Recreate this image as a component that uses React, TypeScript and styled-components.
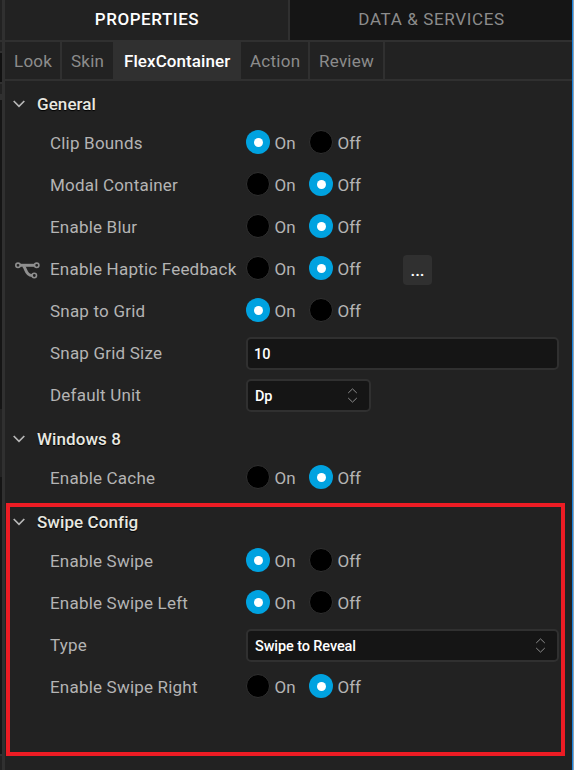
import React from "react";
import styled, { createGlobalStyle, css } from "styled-components";

const Global = createGlobalStyle`
  * { box-sizing: border-box; }
  body { margin: 0; background: #222; font-family: Roboto, "Liberation Sans", sans-serif; overflow: hidden; }
`;

const Window = styled.div`
  position: relative;
  display: flex;
  width: 574px;
  height: 770px;
  overflow: hidden;
  background: #222;
`;

const Gutter = styled.div`
  display: flex;
  flex-direction: column;
  width: 2px;
  background: #1f1f1f;
`;

const GutterPart = styled.div<{ $height: number; $color: string }>`
  height: ${(p) => p.$height}px;
  flex: none;
  background: ${(p) => p.$color};
`;

const Panel = styled.main`
  width: 570px;
  border-left: 3px solid #303030;
`;

const Edge = styled.div`
  width: 2px;
  background: #8fa3b5;
  border-left: 1px solid #1c86e0;
`;

const MainTabs = styled.nav`
  display: grid;
  grid-template-columns: 283px 1fr;
  gap: 2px;
  height: 42px;
  background: #303030;
  border-bottom: 2px solid #303030;
`;

const MainTab = styled.div<{ $active?: boolean }>`
  display: flex;
  align-items: center;
  justify-content: center;
  padding: 0 0 2px 1px;
  font-size: 17px;
  letter-spacing: ${(p) => (p.$active ? 0.55 : 0.63)}px;
  white-space: nowrap;
  font-weight: ${(p) => (p.$active ? 500 : 400)};
  color: ${(p) => (p.$active ? "#fff" : "#8c8c8c")};
  background: ${(p) => (p.$active ? "#222" : "#151515")};
`;

const SubTabs = styled.nav`
  display: flex;
  height: 39px;
  border-bottom: 2px solid #303030;
`;

const SubTab = styled.div<{ $width: number; $active?: boolean; $divided?: boolean }>`
  display: flex;
  align-items: center;
  padding: 0 0 0 9px;
  width: ${(p) => p.$width}px;
  font-size: 17px;
  letter-spacing: 0.25px;
  white-space: nowrap;
  color: #8c8c8c;
  ${(p) => p.$divided && css`border-right: 2px solid #303030;`}
  ${(p) =>
    p.$active &&
    css`
      padding-left: 11px;
      color: #fff;
      font-weight: 500;
      letter-spacing: 0.08px;
      background: #303030;
    `}
`;

const SectionHeader = styled.h2`
  display: flex;
  align-items: center;
  gap: 12px;
  height: 41px;
  margin: 0;
  padding: 5px 0 0 8px;
  font-size: 17px;
  font-weight: 500;
  letter-spacing: 0.08px;
  color: #e8e8e0;
  text-shadow: 0 1px 1px #000;
`;

const Row = styled.div`
  display: flex;
  align-items: center;
  height: 42px;
`;

const IconSlot = styled.div`
  display: flex;
  justify-content: flex-end;
  width: 35px;
  padding: 3px 0 0;
  margin-right: 10px;
`;

const Label = styled.span`
  width: 196px;
  font-size: 17px;
  letter-spacing: 0.2px;
  white-space: nowrap;
  color: #b4b4b4;
`;

const Radio = styled.label`
  display: flex;
  align-items: center;
  gap: 4.5px;
  width: 63px;
  font-size: 17px;
  color: #b4b4b4;
`;

const Dot = styled.span<{ $on: boolean }>`
  display: grid;
  place-items: center;
  width: 24px;
  height: 24px;
  margin-top: -2px;
  flex: none;
  border-radius: 50%;
  ${(p) =>
    p.$on
      ? css`
          background: #00a2e0;
          &::after {
            content: "";
            width: 9px;
            height: 9px;
            border-radius: 50%;
            background: #fff;
          }
        `
      : css`
          background: #000;
          border: 1px solid #303030;
        `}
`;

const MoreButton = styled.button`
  width: 29px;
  height: 30px;
  margin: 2px 0 0 31px;
  padding: 0;
  border: 0;
  border-radius: 4px;
  background: #303030;
  color: #fff;
  font: 500 17px Roboto, sans-serif;
`;

const Field = styled.div<{ $width: number; $select?: boolean }>`
  display: flex;
  align-items: center;
  justify-content: space-between;
  width: ${(p) => p.$width}px;
  height: 33px;
  margin-top: 1px;
  padding: 3px 11px 0 ${(p) => (p.$select ? 7 : 6)}px;
  border: 2px solid #303030;
  border-radius: 5px;
  background: #151515;
  color: #fff;
  font-size: 14.5px;
  line-height: 18px;
  font-weight: 500;
  letter-spacing: -0.1px;

  svg {
    margin-top: -3px;
  }
`;

const Highlight = styled.div`
  position: absolute;
  left: 6px;
  top: 503px;
  width: 559px;
  height: 253px;
  border: 4px solid #ed1c24;
`;

const Chevron = () => (
  <svg width="12" height="8" viewBox="0 0 12 8" fill="none" stroke="#b8b8b8" strokeWidth="1.7">
    <path d="M.7 1 6 6.3 11.3 1" />
  </svg>
);

const Stepper = () => (
  <svg width="10" height="15" viewBox="0 0 10 15" fill="none" stroke="#8c8c8c" strokeWidth="1">
    <path d="M.2 5 4.500 .9 8.800 5M.2 10 4.500 14.1 8.800 10" />
  </svg>
);

const ForkIcon = () => (
  <svg width="25" height="17" viewBox="0 0 25 17" fill="none" stroke="#8f8f8f">
    <path d="M5 3.3h14.500" strokeWidth="3" />
    <path d="M8.500 4C11.500 7 10.500 13.200 17 13.500" strokeWidth="3" />
    <g strokeWidth="1.600">
      <circle cx="3" cy="3.300" r="2.200" />
      <circle cx="21.700" cy="3.300" r="2.200" />
      <circle cx="19.300" cy="13.500" r="2.200" />
    </g>
  </svg>
);

const Toggle = ({ label, on, fork }: { label: string; on?: boolean; fork?: boolean }) => (
  <Row>
    <IconSlot>{fork && <ForkIcon />}</IconSlot>
    <Label>{label}</Label>
    <Radio><Dot $on={!!on} />On</Radio>
    <Radio><Dot $on={!on} />Off</Radio>
    {fork && <MoreButton>...</MoreButton>}
  </Row>
);

const Input = ({ label, value, width, select }: { label: string; value: string; width: number; select?: boolean }) => (
  <Row>
    <IconSlot />
    <Label>{label}</Label>
    <Field $width={width} $select={select}>
      {value}
      {select && <Stepper />}
    </Field>
  </Row>
);

const Section = ({ title, children }: { title: string; children: React.ReactNode }) => (
  <section>
    <SectionHeader><Chevron />{title}</SectionHeader>
    {children}
  </section>
);

export default function App() {
  return (
    <>
      <Global />
      <Window>
        <Gutter>
          <GutterPart $height={40} $color="#222" />
          <GutterPart $height={2} $color="#303030" />
          <GutterPart $height={9} $color="#222" />
          <GutterPart $height={2} $color="#303030" />
          <GutterPart $height={29} $color="#111" />
          <GutterPart $height={2} $color="#303030" />
          <GutterPart $height={10} $color="#222" />
          <GutterPart $height={6} $color="#303030" />
          <GutterPart $height={309} $color="#151515" />
          <GutterPart $height={68} $color="#222" />
          <GutterPart $height={277} $color="#151515" />
          <GutterPart $height={2} $color="#303030" />
          <GutterPart $height={14} $color="#222" />
        </Gutter>
        <Panel>
          <MainTabs>
            <MainTab $active>PROPERTIES</MainTab>
            <MainTab>DATA &amp; SERVICES</MainTab>
          </MainTabs>
          <SubTabs>
            <SubTab $width={57} $divided>Look</SubTab>
            <SubTab $width={51}>Skin</SubTab>
            <SubTab $width={128} $active>FlexContainer</SubTab>
            <SubTab $width={69} $divided>Action</SubTab>
            <SubTab $width={75} $divided>Review</SubTab>
          </SubTabs>
          <Section title="General">
            <Toggle label="Clip Bounds" on />
            <Toggle label="Modal Container" />
            <Toggle label="Enable Blur" />
            <Toggle label="Enable Haptic Feedback" fork />
            <Toggle label="Snap to Grid" on />
            <Input label="Snap Grid Size" value="10" width={313} />
            <Input label="Default Unit" value="Dp" width={125} select />
          </Section>
          <Section title="Windows 8">
            <Toggle label="Enable Cache" />
          </Section>
          <Section title="Swipe Config">
            <Toggle label="Enable Swipe" on />
            <Toggle label="Enable Swipe Left" on />
            <Input label="Type" value="Swipe to Reveal" width={313} select />
            <Toggle label="Enable Swipe Right" />
          </Section>
        </Panel>
        <Edge />
        <Highlight />
      </Window>
    </>
  );
}
